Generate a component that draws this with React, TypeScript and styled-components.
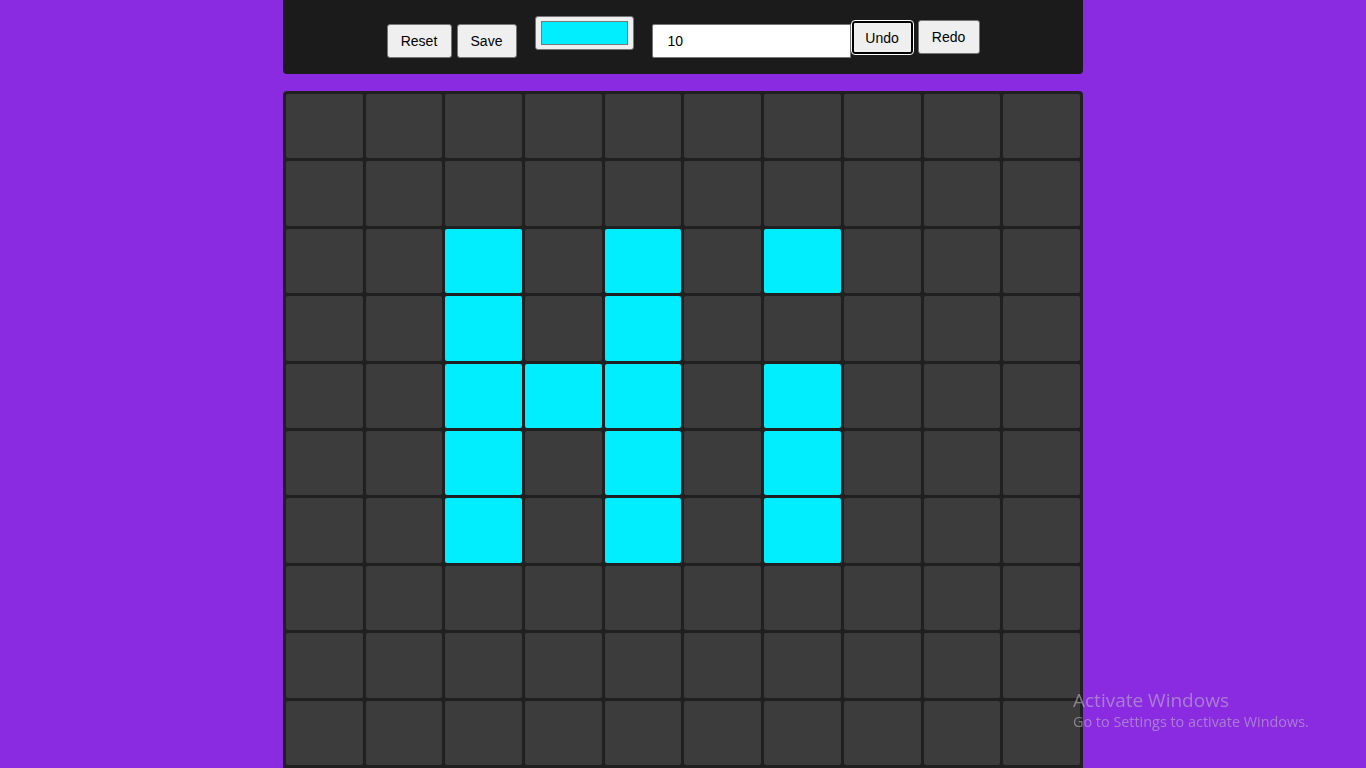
import React, { useState } from 'react'
import styled, { createGlobalStyle } from 'styled-components'

const GlobalStyle = createGlobalStyle`
  html, body {
    margin: 0;
    padding: 0;
    background: #8a2be2;
    font-family: "Liberation Sans", Arial, sans-serif;
    overflow: hidden;
  }
`

const Page = styled.div`
  width: 800px;
  margin: 0 auto;
  display: flex;
  flex-direction: column;
  gap: 17px;
`
const Toolbar = styled.div`
  height: 74px;
  background: #1b1b1b;
  border-radius: 0 0 4px 4px;
  display: flex;
  justify-content: center;
  align-items: flex-start;
`
const Button = styled.button<{ $top: number; $width: number; $focused?: boolean; $gap?: number }>`
  margin-top: ${(p) => p.$top}px;
  margin-left: ${(p) => p.$gap ?? 0}px;
  width: ${(p) => p.$width}px;
  height: ${(p) => (p.$focused ? 33 : 34)}px;
  padding: 0;
  background: #efefef;
  color: #000;
  font-family: "Liberation Sans", Arial, sans-serif;
  font-size: 14px;
  border: ${(p) => (p.$focused ? '2px solid #000' : '1px solid #767676')};
  outline: ${(p) => (p.$focused ? '1px solid #fff' : 'none')};
  border-radius: 3px;
  box-sizing: border-box;
`
const ColorWell = styled.div`
  margin: 16px 18px 0;
  width: 99px;
  height: 34px;
  box-sizing: border-box;
  background: #efefef;
  border: 1px solid #767676;
  border-radius: 3px;
  padding: 4px 5px;
  display: flex;
`
const Swatch = styled.div<{ $color: string }>`
  flex: 1;
  background: ${(p) => p.$color};
  border: 1px solid #777;
`
const SizeInput = styled.input`
  margin-top: 24px;
  width: 199px;
  height: 34px;
  box-sizing: border-box;
  border: 1px solid #767676;
  border-radius: 2px 0 0 2px;
  padding: 0 15px;
  font-family: "Liberation Sans", Arial, sans-serif;
  font-size: 14px;
  color: #000;
  background: #fff;
  outline: none;
`
const Board = styled.div`
  height: 677px;
  box-sizing: border-box;
  background: #202020;
  border-radius: 4px 4px 0 0;
  padding: 3px;
  display: grid;
  grid-template-columns: repeat(10, 1fr);
  grid-template-rows: repeat(10, 1fr);
  gap: 3px;
`
const Cell = styled.div<{ $on: boolean }>`
  background: ${(p) => (p.$on ? '#00eeff' : '#3c3c3c')};
  border-radius: 2px;
`
const Watermark = styled.div`
  position: fixed;
  left: 1073px;
  top: 688px;
  color: rgba(190, 180, 200, 0.6);
  font-family: "Open Sans", "Noto Sans", sans-serif;
`
const WatermarkTitle = styled.div`
  font-size: 19px;
  line-height: 24px;
`
const WatermarkText = styled.div`
  font-size: 14.4px;
  line-height: 20px;
`

const lit: Record<number, number[]> = {
  2: [2, 4, 6],
  3: [2, 4],
  4: [2, 3, 4, 6],
  5: [2, 4, 6],
  6: [2, 4, 6],
}

const App = () => {
  const [size, setSize] = useState('10')
  const cells = []
  for (let r = 0; r < 10; r++) {
    for (let c = 0; c < 10; c++) {
      cells.push(<Cell key={`${r}-${c}`} $on={(lit[r] || []).includes(c)} />)
    }
  }

  return (
    <>
      <GlobalStyle />
      <Page>
        <Toolbar>
          <Button $top={24} $width={65}>Reset</Button>
          <Button $top={24} $width={60} $gap={5}>Save</Button>
          <ColorWell>
            <Swatch $color="#00eeff" />
          </ColorWell>
          <SizeInput value={size} onChange={(e) => setSize(e.target.value)} />
          <Button $top={21} $width={61} $gap={1} $focused>Undo</Button>
          <Button $top={20} $width={62} $gap={5}>Redo</Button>
        </Toolbar>
        <Board>{cells}</Board>
      </Page>
      <Watermark>
        <WatermarkTitle>Activate Windows</WatermarkTitle>
        <WatermarkText>Go to Settings to activate Windows.</WatermarkText>
      </Watermark>
    </>
  )
}

export default App
